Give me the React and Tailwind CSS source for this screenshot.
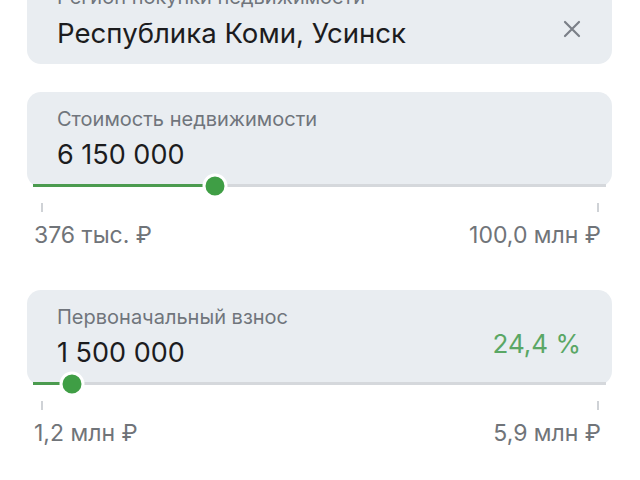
import React from 'react';

const font = { fontFamily: 'Inter, "Noto Sans", sans-serif' };

const Slider = ({ percent }) => (
  <div className="relative mx-[6px] h-[3px] bg-[#d5d8dc]">
    <div className="absolute left-0 top-0 h-[3px] bg-[#4b9b4f]" style={{ width: `${percent}%` }} />
    <div
      className="absolute top-1/2 h-[25px] w-[25px] -translate-x-1/2 -translate-y-1/2 rounded-full border-[3px] border-white bg-[#3f9e45]"
      style={{ left: `${percent}%` }}
    />
  </div>
);

const Range = ({ min, max }) => (
  <div className="pl-[7px] pr-[11px]">
    <div className="flex justify-between pl-[7px] pr-[2px] pt-[16px]">
      <div className="h-[9px] w-[2px] bg-[#cfd2d6]" />
      <div className="h-[9px] w-[2px] bg-[#cfd2d6]" />
    </div>
    <div className="flex justify-between pt-[9px] text-[23px] leading-[28px] text-[#707479]">
      <span>{min}</span>
      <span>{max}</span>
    </div>
  </div>
);

const Field = ({ label, value, right, percent, big }) => (
  <div className="rounded-[14px] bg-[#e9edf1]">
    <div className="flex items-center justify-between pl-[30px] pr-[31px] pt-[12px]">
      <div>
        <div className="text-[20px] leading-[30px] text-[#70757c]">{label}</div>
        <div className={big ? 'pt-[2px] text-[27.6px] leading-[38px] text-[#1c1c1e]' : 'pt-[2px] text-[27px] leading-[38px] text-[#1c1c1e]'}>{value}</div>
      </div>
      {right}
    </div>
    {percent !== undefined ? <div className="pt-[10px]"><Slider percent={percent} /></div> : <div className="h-[12px]" />}
  </div>
);

export default function App() {
  return (
    <div className="h-[480px] w-[640px] overflow-hidden bg-white" style={font}>
      <div className="-mt-[30px] flex flex-col pl-[27px] pr-[28px]">
        <Field
          big
          label="Регион покупки недвижимости"
          value="Республика Коми, Усинск"
          right={
            <svg width="18" height="18" viewBox="0 0 18 18" className="self-start translate-y-[38px]">
              <path d="M2 2 L16 16 M16 2 L2 16" stroke="#7b8088" strokeWidth="2.2" strokeLinecap="round" />
            </svg>
          }
        />
        <div className="h-[28px]" />
        <Field label="Стоимость недвижимости" value="6 150 000" percent={31.7} />
        <Range min="376 тыс. ₽" max="100,0 млн ₽" />
        <div className="h-[41px]" />
        <Field
          label="Первоначальный взнос"
          value="1 500 000"
          percent={6.8}
          right={<div className="pt-[12px] text-[26px] text-[#5aa765]">24,4 %</div>}
        />
        <Range min="1,2 млн ₽" max="5,9 млн ₽" />
      </div>
    </div>
  );
}
